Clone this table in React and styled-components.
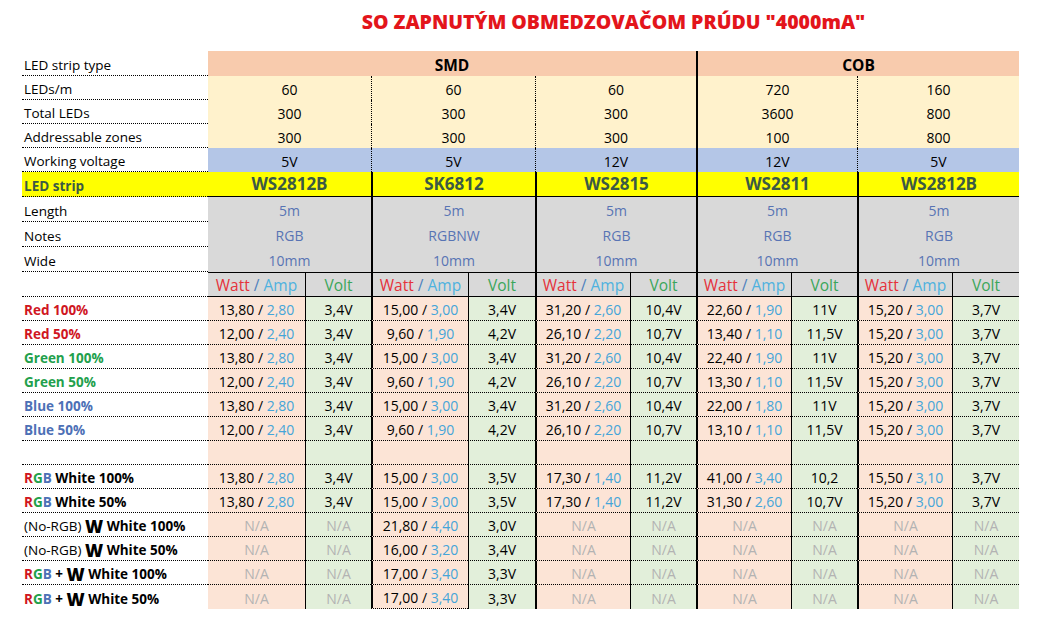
import styled, { createGlobalStyle } from "styled-components";

const GlobalStyle = createGlobalStyle`
  body {
    margin: 0;
    background: #ffffff;
    font-family: "Open Sans", "Noto Sans", sans-serif;
    color: #000;
  }
`;

const COLS = "186px 97px 66px 97px 67px 95px 66px 95px 66px 95px 67px";

const strips = [
  { ledsm: "60", total: "300", zones: "300", volt: "5V", name: "WS2812B", len: "5m", notes: "RGB", wide: "10mm" },
  { ledsm: "60", total: "300", zones: "300", volt: "5V", name: "SK6812", len: "5m", notes: "RGBNW", wide: "10mm" },
  { ledsm: "60", total: "300", zones: "300", volt: "12V", name: "WS2815", len: "5m", notes: "RGB", wide: "10mm" },
  { ledsm: "720", total: "3600", zones: "100", volt: "12V", name: "WS2811", len: "5m", notes: "RGB", wide: "10mm" },
  { ledsm: "160", total: "800", zones: "800", volt: "5V", name: "WS2812B", len: "5m", notes: "RGB", wide: "10mm" },
];

const NA = null;

const measurements = [
  { label: "red100", values: [["13,80", "2,80", "3,4V"], ["15,00", "3,00", "3,4V"], ["31,20", "2,60", "10,4V"], ["22,60", "1,90", "11V"], ["15,20", "3,00", "3,7V"]] },
  { label: "red50", values: [["12,00", "2,40", "3,4V"], ["9,60", "1,90", "4,2V"], ["26,10", "2,20", "10,7V"], ["13,40", "1,10", "11,5V"], ["15,20", "3,00", "3,7V"]] },
  { label: "green100", values: [["13,80", "2,80", "3,4V"], ["15,00", "3,00", "3,4V"], ["31,20", "2,60", "10,4V"], ["22,40", "1,90", "11V"], ["15,20", "3,00", "3,7V"]] },
  { label: "green50", values: [["12,00", "2,40", "3,4V"], ["9,60", "1,90", "4,2V"], ["26,10", "2,20", "10,7V"], ["13,30", "1,10", "11,5V"], ["15,20", "3,00", "3,7V"]] },
  { label: "blue100", values: [["13,80", "2,80", "3,4V"], ["15,00", "3,00", "3,4V"], ["31,20", "2,60", "10,4V"], ["22,00", "1,80", "11V"], ["15,20", "3,00", "3,7V"]] },
  { label: "blue50", values: [["12,00", "2,40", "3,4V"], ["9,60", "1,90", "4,2V"], ["26,10", "2,20", "10,7V"], ["13,10", "1,10", "11,5V"], ["15,20", "3,00", "3,7V"]] },
  { label: "empty", values: ["", "", "", "", ""] },
  { label: "rgbw100", values: [["13,80", "2,80", "3,4V"], ["15,00", "3,00", "3,5V"], ["17,30", "1,40", "11,2V"], ["41,00", "3,40", "10,2"], ["15,50", "3,10", "3,7V"]] },
  { label: "rgbw50", values: [["13,80", "2,80", "3,4V"], ["15,00", "3,00", "3,5V"], ["17,30", "1,40", "11,2V"], ["31,30", "2,60", "10,7V"], ["15,20", "3,00", "3,7V"]] },
  { label: "w100", values: [NA, ["21,80", "4,40", "3,0V"], NA, NA, NA] },
  { label: "w50", values: [NA, ["16,00", "3,20", "3,4V"], NA, NA, NA] },
  { label: "rgbpw100", values: [NA, ["17,00", "3,40", "3,3V"], NA, NA, NA] },
  { label: "rgbpw50", values: [NA, ["17,00", "3,40", "3,3V"], NA, NA, NA] },
];

const C = {
  red: "#d0161f",
  green: "#22a04c",
  blue: "#4d70b6",
  amp: "#45a5d9",
};

function divider(kind) {
  if (kind === "dot") return "border-left: 1px dotted #000;";
  if (kind === "thick") return "border-left: 2px solid #000;";
  if (kind === "thin") return "border-left: 1px solid #000;";
  return "";
}

const Page = styled.div`
  padding-left: 22px;
  width: 997px;
`;

const TitleRow = styled.div`
  display: grid;
  grid-template-columns: ${COLS};
  height: 51px;
`;

const Title = styled.h1`
  grid-column: 2 / -1;
  margin: 0;
  padding-top: 10px;
  text-align: center;
  font-size: 19.5px;
  line-height: 24px;
  font-weight: 800;
  color: #e3151b;
`;

const Row = styled.div`
  display: grid;
  grid-template-columns: ${COLS};
  height: ${(p) => p.$h}px;
`;

const Label = styled.div`
  display: flex;
  align-items: flex-end;
  padding: 0 0 1px 2px;
  box-sizing: border-box;
  font-size: ${(p) => (p.$bold ? "13.5px" : "13.5px")};
  line-height: 18px;
  font-weight: ${(p) => (p.$bold ? 700 : 400)};
  color: ${(p) => p.$color || "#000"};
  background: ${(p) => p.$bg || "transparent"};
  border-bottom: ${(p) => (p.$noLine ? "none" : "1px dotted #000")};
  white-space: nowrap;
`;

const Part = styled.span`
  color: ${(p) => p.$color || "inherit"};
  font-size: ${(p) => (p.$big ? "17.5px" : "inherit")};
  font-weight: ${(p) => (p.$weight ? p.$weight : "inherit")};
`;

const GroupHead = styled.div`
  grid-column: span ${(p) => p.$span};
  display: flex;
  align-items: flex-end;
  justify-content: center;
  padding-bottom: 1px;
  box-sizing: border-box;
  background: #f8cbad;
  font-size: 15.5px;
  line-height: 20px;
  font-weight: 700;
  ${(p) => divider(p.$divider)}
`;

const SpecCell = styled.div`
  grid-column: span 2;
  display: flex;
  align-items: flex-end;
  justify-content: center;
  padding-bottom: 1px;
  box-sizing: border-box;
  background: ${(p) => p.$bg};
  font-size: 14px;
  line-height: 18px;
  ${(p) => divider(p.$divider)}
`;

const StripName = styled.div`
  grid-column: span 2;
  display: flex;
  align-items: flex-end;
  justify-content: center;
  padding-bottom: 1px;
  box-sizing: border-box;
  background: #ffff00;
  border-bottom: 1px solid #000;
  font-size: 17px;
  line-height: 22px;
  font-weight: 700;
  color: #3b5a45;
  ${(p) => divider(p.$divider)}
`;

const InfoCell = styled.div`
  grid-column: span 2;
  display: flex;
  align-items: flex-end;
  justify-content: center;
  padding-bottom: 2px;
  box-sizing: border-box;
  background: #d9d9d9;
  font-size: 14px;
  line-height: 18px;
  color: #5874b4;
  ${(p) => divider(p.$divider)}
`;

const UnitHead = styled.div`
  display: flex;
  align-items: flex-end;
  justify-content: center;
  padding-bottom: 1px;
  box-sizing: border-box;
  background: #d9d9d9;
  border-top: 1px solid #000;
  border-bottom: 1px solid #000;
  font-size: 15.5px;
  line-height: 20px;
  ${(p) => divider(p.$divider)}
`;

const Value = styled.div`
  display: flex;
  align-items: flex-end;
  justify-content: center;
  padding-bottom: 1px;
  box-sizing: border-box;
  background: ${(p) => (p.$kind === "watt" ? "#fce4d6" : "#e2efda")};
  border-bottom: ${(p) => (p.$line ? "1px dotted #000" : "none")};
  font-size: 14px;
  line-height: 18px;
  color: ${(p) => (p.$muted ? "#b3b3b3" : "#000")};
  white-space: pre;
  ${(p) => divider(p.$divider)}
`;

function RowLabel({ kind, last }) {
  const bold = { $bold: true, $noLine: last };
  switch (kind) {
    case "red100":
      return <Label {...bold} $color={C.red}>Red 100%</Label>;
    case "red50":
      return <Label {...bold} $color={C.red}>Red 50%</Label>;
    case "green100":
      return <Label {...bold} $color={C.green}>Green 100%</Label>;
    case "green50":
      return <Label {...bold} $color={C.green}>Green 50%</Label>;
    case "blue100":
      return <Label {...bold} $color={C.blue}>Blue 100%</Label>;
    case "blue50":
      return <Label {...bold} $color={C.blue}>Blue 50%</Label>;
    case "rgbw100":
    case "rgbw50":
      return (
        <Label {...bold}>
          <Part $color={C.red}>R</Part>
          <Part $color={C.green}>G</Part>
          <Part $color={C.blue}>B</Part>
          &nbsp;White {kind === "rgbw100" ? "100%" : "50%"}
        </Label>
      );
    case "w100":
    case "w50":
      return (
        <Label $noLine={last}>
          (No-RGB)&nbsp;
          <Part $big $weight={800}>W</Part>
          <Part $weight={700}>&nbsp;White {kind === "w100" ? "100%" : "50%"}</Part>
        </Label>
      );
    case "rgbpw100":
    case "rgbpw50":
      return (
        <Label {...bold}>
          <Part $color={C.red}>R</Part>
          <Part $color={C.green}>G</Part>
          <Part $color={C.blue}>B</Part>
          &nbsp;+&nbsp;<Part $big $weight={800}>W</Part>
          &nbsp;White {kind === "rgbpw100" ? "100%" : "50%"}
        </Label>
      );
    default:
      return <Label />;
  }
}

const specDivider = (i) => (i === 0 ? "none" : i === 3 ? "thick" : "dot");
const stripDivider = (i) => (i === 0 ? "none" : "thick");

export default function App() {
  const specRows = [
    { label: "LEDs/m", key: "ledsm", bg: "#fff2cc" },
    { label: "Total LEDs", key: "total", bg: "#fff2cc" },
    { label: "Addressable zones", key: "zones", bg: "#fff2cc" },
    { label: "Working voltage", key: "volt", bg: "#b4c6e7" },
  ];
  const infoRows = [
    { label: "Length", key: "len" },
    { label: "Notes", key: "notes" },
    { label: "Wide", key: "wide" },
  ];

  return (
    <>
      <GlobalStyle />
      <Page>
        <TitleRow>
          <Title>SO ZAPNUTÝM OBMEDZOVAČOM PRÚDU "4000mA"</Title>
        </TitleRow>

        <Row $h={25}>
          <Label>LED strip type</Label>
          <GroupHead $span={6}>SMD</GroupHead>
          <GroupHead $span={4} $divider="thick">COB</GroupHead>
        </Row>

        {specRows.map((r) => (
          <Row $h={24} key={r.key}>
            <Label>{r.label}</Label>
            {strips.map((s, i) => (
              <SpecCell key={i} $bg={r.bg} $divider={specDivider(i)}>
                {s[r.key]}
              </SpecCell>
            ))}
          </Row>
        ))}

        <Row $h={25}>
          <Label $bold $bg="#ffff00" $color="#3b5a45">LED strip</Label>
          {strips.map((s, i) => (
            <StripName key={i} $divider={stripDivider(i)}>
              {s.name}
            </StripName>
          ))}
        </Row>

        {infoRows.map((r) => (
          <Row $h={25} key={r.key}>
            <Label>{r.label}</Label>
            {strips.map((s, i) => (
              <InfoCell key={i} $divider={stripDivider(i)}>
                {s[r.key]}
              </InfoCell>
            ))}
          </Row>
        ))}

        <Row $h={25}>
          <Label />
          {strips.map((s, i) => [
            <UnitHead key={`w${i}`} $divider={stripDivider(i)}>
              <Part $color="#e5323b">Watt</Part>
              <Part $color="#4f81bd">&nbsp;/&nbsp;</Part>
              <Part $color="#4fb2df">Amp</Part>
            </UnitHead>,
            <UnitHead key={`v${i}`} $divider="thin">
              <Part $color="#3aa65a">Volt</Part>
            </UnitHead>,
          ])}
        </Row>

        {measurements.map((m, ri) => {
          const last = ri === measurements.length - 1;
          return (
            <Row $h={24} key={m.label}>
              <RowLabel kind={m.label} last={last} />
              {m.values.map((v, i) => {
                const line = !last || i === 1;
                const watt =
                  v === NA ? "N/A" : v === "" ? "" : (
                    <span>
                      {`${v[0]} / `}
                      <Part $color={C.amp}>{v[1]}</Part>
                    </span>
                  );
                const volt = v === NA ? "N/A" : v === "" ? "" : v[2];
                return [
                  <Value
                    key={`w${i}`}
                    $kind="watt"
                    $muted={v === NA}
                    $line={line}
                    $divider={stripDivider(i)}
                  >
                    {watt}
                  </Value>,
                  <Value
                    key={`v${i}`}
                    $kind="volt"
                    $muted={v === NA}
                    $line={!last}
                    $divider="thin"
                  >
                    {volt}
                  </Value>,
                ];
              })}
            </Row>
          );
        })}
      </Page>
    </>
  );
}
